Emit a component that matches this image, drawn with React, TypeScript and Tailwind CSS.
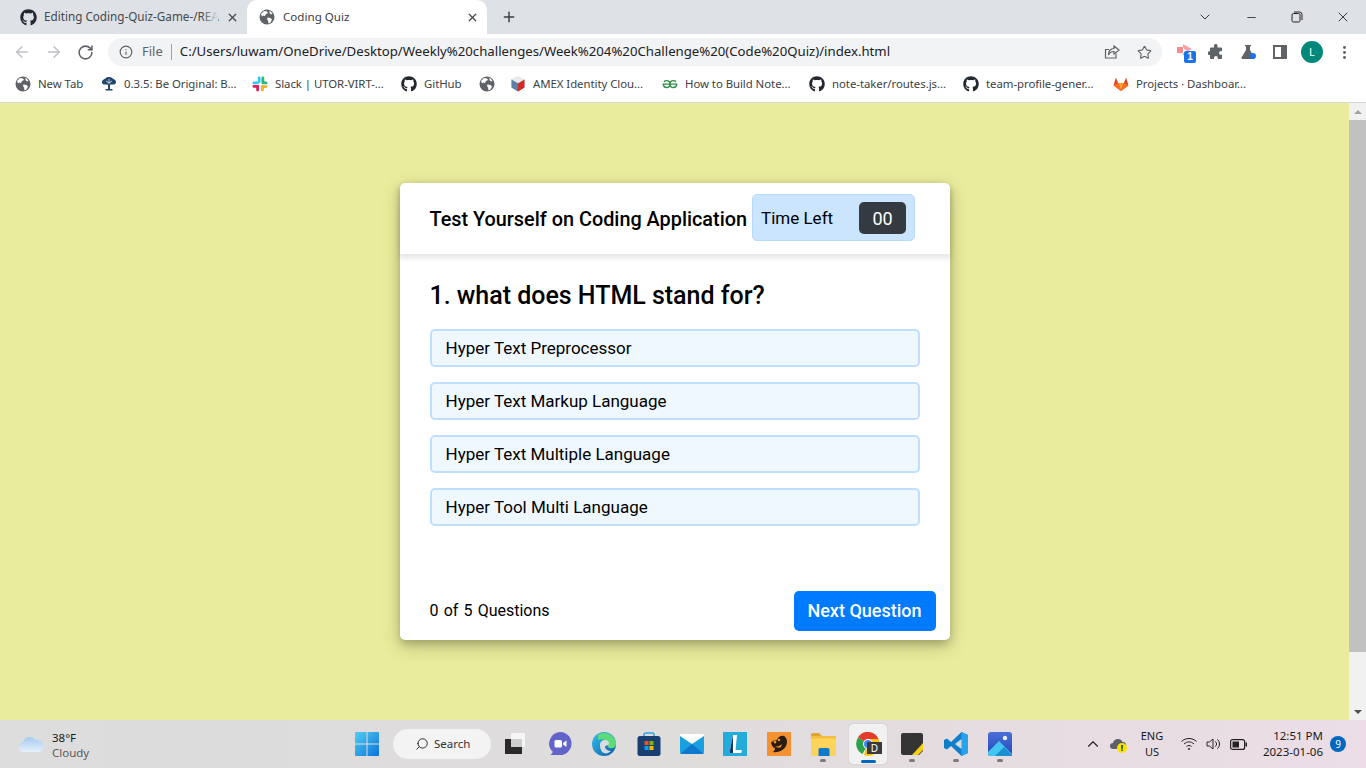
import React from "react";
import { FaGithub } from "react-icons/fa";
import { ChevronDown, ChevronUp, Minus, X, Plus, ArrowLeft, ArrowRight, RotateCw, Info, Star, Search, MoreVertical } from "lucide-react";

const Globe = ({ s = 16 }: { s?: number }) => (
  <svg width={s} height={s} viewBox="0 0 16 16" className="shrink-0">
    <circle cx="8" cy="8" r="7.5" fill="#5f6368" />
    <path d="M2 5l3-3 3 .5 1 1.500-2 1-1 2-2-.5-1 1zM8.500 8.500l3 .5 1.500 1.500-1.500 3-2 1-.5-3-1-1.500zM10.500 1.500l3 3-1.500 1-1.500-1.500z" fill="#fff" />
  </svg>
);
const Gh = () => <FaGithub size={16} color="#24292f" className="shrink-0" />;

const Tree = () => (
  <svg width={16} height={16} viewBox="0 0 16 16" className="shrink-0">
    <path d="M8 1C5 1 4 3 2 4c-1.500 1-1.500 4 1 4.500 1.500.3 3-.3 4 .5v4H4.500v1.500h7V13H9V9c1-.8 2.500-.2 4-.5 2.500-.5 2.500-3.500 1-4.500-2-1-3-3-6-3z" fill="#22466e" />
    <path d="M8 3v5M5 5l3 2 3-2" fill="none" stroke="#fff" strokeWidth=".7" />
  </svg>
);
const Slack = () => (
  <svg width={16} height={16} viewBox="0 0 16 16" className="shrink-0">
    <rect x="5.800" y="0.500" width="2.800" height="6.500" rx="1.400" fill="#36c5f0" />
    <rect x="0.500" y="5.500" width="6.500" height="2.800" rx="1.400" fill="#36c5f0" />
    <rect x="9.500" y="0.500" width="2.800" height="7" rx="1.400" fill="#2eb67d" />
    <rect x="9.500" y="5.500" width="6" height="2.800" rx="1.400" fill="#2eb67d" />
    <rect x="9" y="9.200" width="2.800" height="6.300" rx="1.400" fill="#ecb22e" />
    <rect x="9" y="9.200" width="6.500" height="2.800" rx="1.400" fill="#ecb22e" />
    <rect x="4.200" y="9" width="2.800" height="6.500" rx="1.400" fill="#e01e5a" />
    <rect x="0.500" y="9" width="6.500" height="2.800" rx="1.400" fill="#e01e5a" />
  </svg>
);
const Amex = () => (
  <svg width={16} height={16} viewBox="0 0 16 16" className="shrink-0">
    <path d="M8 .5l6.500 3v8L8 15.500 1.500 11.500v-8z" fill="#c8ccd0" />
    <path d="M8 7.500L1.500 3.500v8L8 15.500z" fill="#5b7fa8" />
    <path d="M8 7.500l6.500-4v8L8 15.500z" fill="#cf2a2a" />
    <path d="M8 1l6 2.600L8 7 2 3.600z" fill="#e9ebee" />
  </svg>
);
const Gfg = () => (
  <svg width={16} height={16} viewBox="0 0 16 16" className="shrink-0" fill="none" stroke="#2f8d46" strokeWidth="1.300">
    <path d="M8 8.200H14.800C14.500 10.500 13 11.500 11.500 11.500 9.500 11.500 8 10 8 8.200 8 6.200 9.500 4.700 11.500 4.700 12.600 4.700 13.500 5.200 14 5.900" />
    <path d="M8 8.200H1.200C1.500 10.500 3 11.500 4.500 11.500 6.500 11.500 8 10 8 8.200 8 6.200 6.500 4.700 4.500 4.700 3.400 4.700 2.500 5.200 2 5.900" />
  </svg>
);
const Gitlab = () => (
  <svg width={16} height={16} viewBox="0 0 17 16" className="shrink-0">
    <path d="M8.500 15.500L.6 9.500 3 1l2.500 6h6L14 1l2.400 8.500z" fill="#e24329" />
    <path d="M8.500 15.500L5.500 7h6z" fill="#fca326" />
    <path d="M8.500 15.500L.6 9.500l4.900-2.500zM8.500 15.500l7.900-6-4.900-2.500z" fill="#fc6d26" />
  </svg>
);

const bookmarks: { icon: React.ReactNode; label: string; w: string }[] = [
  { icon: <Globe />, label: "New Tab", w: "w-[46px]" },
  { icon: <Tree />, label: "0.3.5: Be Original: B...", w: "w-[111px]" },
  { icon: <Slack />, label: "Slack | UTOR-VIRT-...", w: "w-[109px]" },
  { icon: <Gh />, label: "GitHub", w: "w-[38px]" },
  { icon: <Globe />, label: "", w: "w-0" },
  { icon: <Amex />, label: "AMEX Identity Clou...", w: "w-[112px]" },
  { icon: <Gfg />, label: "How to Build Note...", w: "w-[107px]" },
  { icon: <Gh />, label: "note-taker/routes.js...", w: "w-[114px]" },
  { icon: <Gh />, label: "team-profile-gener...", w: "w-[110px]" },
  { icon: <Gitlab />, label: "Projects · Dashboar...", w: "w-[111px]" },
];

const options = ["Hyper Text Preprocessor", "Hyper Text Markup Language", "Hyper Text Multiple Language", "Hyper Tool Multi Language"];

const ui = "font-['Noto_Sans','Open_Sans',sans-serif]";

function Chrome() {
  return (
    <div className="flex flex-col shrink-0 bg-white">
      {/* tab strip */}
      <div className="h-[34px] bg-[#dee1e6] flex items-center relative">
        <div className="w-[247px] h-full flex items-center pl-[20px] shrink-0">
          <FaGithub size={17} color="#24292f" className="shrink-0" />
          <div className="ml-[7px] w-[174px] relative whitespace-nowrap text-[11.7px] text-[#45484d]">
            Editing Coding-Quiz-Game-/REA
            <span className="absolute right-0 top-0 h-full w-[16px] bg-gradient-to-r from-transparent to-[#dee1e6]" />
          </div>
          <X size={13} strokeWidth={2.4} color="#45484d" className="ml-[8px]" />
        </div>
        <div className="w-[240px] h-full bg-white rounded-t-[10px] flex items-center pl-[12px] shrink-0">
          <Globe />
          <span className="ml-[8px] w-[178px] text-[11.6px] text-[#3c4043]">Coding Quiz</span>
          <X size={13} strokeWidth={2.4} color="#45484d" className="ml-[5px]" />
        </div>
        <Plus size={16} strokeWidth={2.2} color="#3c4043" className="ml-[14px]" />
        <div className="ml-auto flex items-center h-full">
          <ChevronDown size={16} strokeWidth={1.4} color="#2b2b2b" className="mr-[32px]" />
          <Minus size={13} strokeWidth={1.4} color="#111" className="mr-[33px]" />
          <svg width={12} height={12} viewBox="0 0 12 12" fill="none" stroke="#222" strokeWidth="1" className="mr-[32px]">
            <rect x="1" y="2.500" width="8" height="8.500" rx="1.500" />
            <path d="M3 1h5.500A2.500 2.500 0 0 1 11 3.500V9" />
          </svg>
          <X size={16} strokeWidth={1.2} color="#111" className="mr-[15px]" />
        </div>
      </div>
      {/* toolbar */}
      <div className="h-[34px] flex items-center pt-[2px] relative">
        <ArrowLeft size={18} strokeWidth={2} color="#bdc1c6" className="ml-[13px]" />
        <ArrowRight size={18} strokeWidth={2} color="#bdc1c6" className="ml-[14px]" />
        <RotateCw size={17} strokeWidth={2.2} color="#5f6368" className="ml-[14px]" />
        <div className="ml-[14px] w-[1054px] h-[28px] rounded-full bg-[#f1f3f4] flex items-center pl-[11px]">
          <Info size={14} strokeWidth={2} color="#5f6368" />
          <span className="ml-[9px] text-[13px] text-[#5f6368]">File</span>
          <span className="ml-[8px] w-px h-[16px] bg-[#9aa0a6]" />
          <span className="ml-[8px] text-[13.2px] text-[#202124] whitespace-nowrap">C:/Users/luwam/OneDrive/Desktop/Weekly%20challenges/Week%204%20Challenge%20(Code%20Quiz)/index.html</span>
          <div className="ml-auto flex items-center gap-[17px] pr-[10px]">
            <svg width={16} height={16} viewBox="0 0 16 16" fill="none" stroke="#5f6368" strokeWidth="1.200">
              <path d="M12 9.500V14H1.500V5.500H5" />
              <path d="M10 2l5 4-5 4V7.500C7.500 7.500 5.500 8.500 4.500 11c0-4 2-6.500 5.500-6.500z" />
            </svg>
            <Star size={15} strokeWidth={1.8} color="#5f6368" />
          </div>
        </div>
        <div className="relative ml-[15px] w-[16px] h-[16px]">
          <svg width={18} height={16} viewBox="0 0 18 16">
            <rect x="0" y="3" width="6" height="6" fill="#f68b8b" />
            <path d="M6 0l9 5-4 2.500L7.500 5.500 6 3z" fill="#f8a5a5" />
            <path d="M6 9l5-1.500-1 3-4 .5z" fill="#f8a5a5" />
          </svg>
          <span className="absolute left-[7px] top-[7px] w-[12px] h-[12px] bg-[#1a73e8] rounded-[2px] text-white text-[10px] leading-[12px] text-center font-bold font-['Liberation_Sans',sans-serif]">1</span>
        </div>
        <svg width={16} height={16} viewBox="0 0 16 16" className="ml-[15px]">
          <path d="M6 1.500a1.800 1.800 0 0 1 3.500 0V3.500H13a1 1 0 0 1 1 1V7h-1a1.900 1.900 0 0 0 0 3.800h1V14a1 1 0 0 1-1 1H9.800v-1a1.900 1.900 0 0 0-3.800 0v1H3a1 1 0 0 1-1-1v-3h-.5a1.900 1.900 0 0 1 0-3.800H2V4.500a1 1 0 0 1 1-1h3z" fill="#5f6368" />
        </svg>
        <div className="relative ml-[16px] w-[16px] h-[16px]">
          <svg width={16} height={16} viewBox="0 0 16 16">
            <path d="M5 1h6v1.200h-1V6l4.500 7.500A1 1 0 0 1 13.600 15H2.400a1 1 0 0 1-.9-1.500L6 6V2.200H5z" fill="#5f6368" />
          </svg>
          <span className="absolute left-[10px] top-[9px] w-[6px] h-[6px] rounded-full bg-[#1a73e8]" />
        </div>
        <svg width={14} height={14} viewBox="0 0 14 14" className="ml-[17px]">
          <path d="M0 0h14v14H0zM2 2v10h6V2z" fill="#5f6368" fillRule="evenodd" />
        </svg>
        <div className="ml-[14px] w-[22px] h-[22px] rounded-full bg-[#00897b] text-white text-[11px] flex items-center justify-center">L</div>
        <MoreVertical size={17} strokeWidth={2.2} color="#5f6368" className="ml-[13px]" />
      </div>
      {/* bookmarks */}
      <div className="h-[34px] flex items-center pl-[15px] pb-[2px] gap-[17px]">
        {bookmarks.map((b, i) => (
          <div key={i} className={`flex items-center gap-[7px] ${b.label ? "" : "-mr-[2px]"}`}>
            {b.icon}
            {b.label && <span className={`${b.w} text-[11.4px] tracking-[-0.05px] whitespace-nowrap text-[#3c4043]`}>{b.label}</span>}
          </div>
        ))}
      </div>
      <div className="h-px bg-[#d5d7dc]" />
    </div>
  );
}

function Quiz() {
  return (
    <div className="flex-1 min-w-0 bg-[#e9ec9c] flex items-center justify-center font-['Roboto',sans-serif] text-black">
      <div className="w-[550px] h-[457px] bg-white rounded-[5px] shadow-[0_4px_8px_0_rgba(0,0,0,0.2),0_6px_20px_0_rgba(0,0,0,0.19)] flex flex-col">
        <header className="h-[71px] px-[30px] rounded-t-[5px] flex items-center shadow-[0_3px_5px_1px_rgba(0,0,0,0.1)] shrink-0">
          <span className="text-[19.85px] font-medium whitespace-nowrap mt-[2px]">Test Yourself on Coding Application</span>
          <div className="ml-[5px] w-[163px] h-[47px] bg-[#cce5ff] border border-[#b8daff] rounded-[5px] flex items-center justify-between pl-[8px] pr-[8px] mt-[-2px]">
            <span className="text-[17px] mt-[3px]">Time Left</span>
            <span className="w-[47px] h-[32px] bg-[#343a40] text-white rounded-[5px] text-[18px] flex items-center justify-center pt-[1px]">00</span>
          </div>
        </header>
        <section className="px-[30px] pt-[27px] flex-1">
          <h2 className="text-[25px] leading-[30px] font-medium tracking-[-0.02px]">1. what does HTML stand for?</h2>
          <div className="mt-[18px] flex flex-col gap-[15px]">
            {options.map((o) => (
              <div key={o} className="w-[490px] h-[38px] bg-[#f0f8ff] border-2 border-[#c0dfff] rounded-[5px] pl-[14px] pt-[1px] flex items-center text-[17px]">{o}</div>
            ))}
          </div>
        </section>
        <footer className="h-[60px] pl-[30px] pr-[14px] flex items-center justify-between shrink-0">
          <span className="text-[16px] [word-spacing:1.200px] mt-[1px]">0 of 5 Questions</span>
          <button className="w-[142px] h-[40px] mt-[1px] bg-[#007bff] text-white rounded-[5px] text-[18px] font-medium">Next Question</button>
        </footer>
      </div>
    </div>
  );
}

function Scrollbar() {
  return (
    <div className="w-[17px] bg-[#f1f1f1] flex flex-col items-center shrink-0">
      <div className="h-[17px] flex items-center justify-center shrink-0">
        <span className="w-0 h-0 border-x-[4px] border-x-transparent border-b-[4px] border-b-[#a3a3a3]" />
      </div>
      <div className="w-full h-[532px] bg-[#c1c1c1]" />
      <div className="flex-1" />
      <div className="h-[17px] flex items-center justify-center shrink-0">
        <span className="w-0 h-0 border-x-[4px] border-x-transparent border-t-[4px] border-t-[#505050]" />
      </div>
    </div>
  );
}

const TB = ({ children, w = 44, active, dot }: { children: React.ReactNode; w?: number; active?: boolean; dot?: boolean }) => (
  <div className={`relative h-[40px] flex items-center justify-center shrink-0 rounded-[4px] ${active ? "bg-[#f2f1f2] shadow-[0_0_1px_rgba(0,0,0,0.25)]" : ""}`} style={{ width: w }}>
    {children}
    {active && <span className="absolute bottom-[1px] left-[12px] w-[15px] h-[3px] rounded-full bg-[#0067c0]" />}
    {dot && <span className="absolute bottom-[2px] left-1/2 -translate-x-1/2 w-[6px] h-[3px] rounded-full bg-[#7b7b7b]" />}
  </div>
);

function Taskbar() {
  return (
    <div className={`h-[48px] shrink-0 flex items-center bg-gradient-to-r from-[#dddddd] via-[#dfdcdc] to-[#ecdde6] text-[#1a1a1a] ${ui}`}>
      <div className="w-[355px] pl-[18px] flex items-center shrink-0">
        <svg width={26} height={18} viewBox="0 0 26 18">
          <defs>
            <linearGradient id="cl" x1="0" y1="0" x2="0" y2="1">
              <stop offset="0" stopColor="#a5c8f2" />
              <stop offset="1" stopColor="#e7f1fb" />
            </linearGradient>
          </defs>
          <path d="M6 17a5 5 0 0 1-1-9.900A7 7 0 0 1 17.500 5 5.500 5.500 0 0 1 21 17z" fill="url(#cl)" />
        </svg>
        <div className="ml-[8px] pt-[2px] flex flex-col leading-[15px] text-[11.5px]">
          <span>38°F</span>
          <span className="text-[#5a5a5a]">Cloudy</span>
        </div>
      </div>
      <svg width={24} height={24} viewBox="0 0 24 24" className="shrink-0">
        <defs>
          <linearGradient id="wi" x1="0" y1="0" x2="1" y2="1">
            <stop offset="0" stopColor="#52cdf5" />
            <stop offset="1" stopColor="#0a74d6" />
          </linearGradient>
        </defs>
        <path d="M1 0h10.500v11.500H0V1a1 1 0 0 1 1-1zM12.500 0H23a1 1 0 0 1 1 1v10.500H12.500zM0 12.500h11.500V24H1a1 1 0 0 1-1-1zM12.500 12.500H24V23a1 1 0 0 1-1 1H12.500z" fill="url(#wi)" />
      </svg>
      <div className="ml-[14px] w-[98px] h-[30px] rounded-full bg-[#f3f3f3] flex items-center pl-[22px] shrink-0">
        <Search size={14} strokeWidth={1.600} color="#222" className="-scale-x-100" />
        <span className="ml-[5px] text-[11.5px] text-[#333]">Search</span>
      </div>
      <div className="ml-[2px] flex items-center shrink-0">
        <TB>
          <svg width={24} height={24} viewBox="0 0 24 24">
            <rect x="8" y="1" width="14" height="14" fill="#f6f6f6" />
            <rect x="2" y="7" width="17" height="15" fill="#2a2a2a" />
            <rect x="8" y="7" width="11" height="8" fill="#cfcfcf" />
          </svg>
        </TB>
        <TB w={45}>
          <svg width={24} height={24} viewBox="0 0 24 24">
            <path d="M12 0a11.500 11.500 0 0 1 0 23H2.500L5 20A11.500 11.500 0 0 1 12 0z" fill="#6264c9" />
            <rect x="6.500" y="8" width="7.500" height="7.500" rx="1.500" fill="#fff" />
            <path d="M15 11l3.500-2.500v6.500L15 12.500z" fill="#fff" />
          </svg>
        </TB>
        <TB>
          <svg width={24} height={24} viewBox="0 0 24 24">
            <defs>
              <linearGradient id="ed" x1="0" y1="0" x2="1" y2="1">
                <stop offset="0" stopColor="#35c1f1" />
                <stop offset="1" stopColor="#0c59a4" />
              </linearGradient>
            </defs>
            <circle cx="12" cy="12" r="12" fill="url(#ed)" />
            <path d="M6 3c6-4 15-2 18 7 .5 4-2 7-6 6-2-.5-3-2-2-4-1-4-6-6-10-4z" fill="#5fdc7a" />
            <path d="M8 13c0-3 2-5 5-5 3 0 4 2 4 4-1 2-4 1-4 3 0 2 3 4 6 4-2 2-5 3-7 2-3-1-4-5-4-8z" fill="#d8dcde" />
          </svg>
        </TB>
        <TB w={45}>
          <svg width={24} height={24} viewBox="0 0 24 24">
            <path d="M7 5V3a2 2 0 0 1 2-2h6a2 2 0 0 1 2 2v2" fill="none" stroke="#27a3e3" strokeWidth="1.500" />
            <rect x="0.500" y="4" width="23" height="20" rx="2.500" fill="#173f72" />
            <rect x="7.500" y="9" width="4" height="4" fill="#f25022" />
            <rect x="12.500" y="9" width="4" height="4" fill="#7fba00" />
            <rect x="7.500" y="14" width="4" height="4" fill="#00a4ef" />
            <rect x="12.500" y="14" width="4" height="4" fill="#ffb900" />
          </svg>
        </TB>
        <TB w={42}>
          <svg width={24} height={20} viewBox="0 0 24 20">
            <rect width="24" height="20" rx="2" fill="#1a9fe0" />
            <path d="M0 2l12 8 12-8V1a1 1 0 0 0-1-1H1a1 1 0 0 0-1 1z" fill="#fff" />
            <path d="M0 20L12 10l12 10z" fill="#0f78cc" />
          </svg>
        </TB>
        <TB>
          <div className="w-[24px] h-[24px] bg-[#23abd9] flex items-center justify-center relative">
            <svg width={24} height={24} viewBox="0 0 24 24">
              <path d="M10 3h4l-1.500 15H19l-.8 3H6.500z" fill="#fff" />
              <path d="M10 3L6.500 21h3.500z" fill="#16306c" />
            </svg>
          </div>
        </TB>
        <TB>
          <div className="w-[24px] h-[24px] bg-[#f49232] flex items-center justify-center">
            <svg width={20} height={18} viewBox="0 0 20 18">
              <path d="M2 8c1-2 3-3 6-3 1-3 4-5 7-4 3 2 4 6 2 10-2 4-8 7-13 6 1-1 2-2 2-4-2 0-3-3-4-5z" fill="#2a1c10" />
              <circle cx="6" cy="7" r="1.400" fill="#f49232" />
              <circle cx="10" cy="5" r="1.200" fill="#f49232" />
              <path d="M6 11c2 1 5 0 7-2l-1 3c-2 1-4 1-6-1z" fill="#f49232" />
            </svg>
          </div>
        </TB>
        <TB dot>
          <svg width={25} height={23} viewBox="0 0 25 23">
            <path d="M0 2a2 2 0 0 1 2-2h6l3 3h-11z" fill="#e0a530" />
            <path d="M0 3h23a2 2 0 0 1 2 2v16a2 2 0 0 1-2 2H2a2 2 0 0 1-2-2z" fill="#fcd45c" />
            <rect x="0" y="3" width="25" height="2.500" fill="#f3bd42" />
            <path d="M9 15h8a1.500 1.500 0 0 1 1.500 1.500V23h-11v-6.500A1.500 1.500 0 0 1 9 15z" fill="#0f78c8" />
          </svg>
        </TB>
        <div className="w-[4px] shrink-0" />
        <TB w={38} active>
          <svg width={24} height={24} viewBox="0 0 24 24">
            <path d="M12 12L2 5.500A11.500 11.500 0 0 1 22.500 7H12z" fill="#e33b2e" />
            <path d="M12 12l-5.500 10A11.500 11.500 0 0 1 2 5.500z" fill="#2ea24a" />
            <path d="M12 7h10.500A11.500 11.500 0 0 1 8 23z" fill="#fbc116" />
            <circle cx="12" cy="12" r="5" fill="#fff" />
            <circle cx="12" cy="12" r="4" fill="#4285f4" />
          </svg>
          <span className="absolute left-[18px] top-[18px] w-[15px] h-[12px] bg-[#3a3a3a] text-white text-[10px] leading-[12px] text-center">D</span>
        </TB>
        <TB w={50} dot>
          <svg width={22} height={22} viewBox="0 0 22 22">
            <path d="M2 0h18a2 2 0 0 1 2 2v16l-4 4H2a2 2 0 0 1-2-2V2a2 2 0 0 1 2-2z" fill="#343434" />
            <path d="M11 22L22 10v7l-5 5z" fill="#f6d10f" />
          </svg>
        </TB>
        <TB w={38} dot>
          <svg width={24} height={24} viewBox="0 0 24 24">
            <path d="M17.500 0L24 3v18l-6.500 3L7 14l-4 3.500L0 16V8l3-1.500L7 10z" fill="#0d7fca" />
            <path d="M17.500 0L24 3v18l-6.500 3z" fill="#2aa3ef" />
            <path d="M17.500 7L11 12l6.500 5z" fill="#dedcdc" />
          </svg>
        </TB>
        <TB w={50} dot>
          <svg width={24} height={24} viewBox="0 0 24 24">
            <defs>
              <linearGradient id="ph" x1="0" y1="0" x2="0" y2="1">
                <stop offset="0" stopColor="#4b6fd8" />
                <stop offset="1" stopColor="#1f49b8" />
              </linearGradient>
            </defs>
            <rect width="24" height="24" rx="3" fill="url(#ph)" />
            <circle cx="17" cy="6" r="2.200" fill="#eef" />
            <path d="M0 20l11-11 13 13v-1a3 3 0 0 1-3 3H3a3 3 0 0 1-3-3z" fill="#43c6f0" />
            <path d="M7 24l9-9 8 8v1z" fill="#1b8fd0" />
          </svg>
        </TB>
      </div>
      <div className="ml-auto flex items-center pr-[20px] shrink-0">
        <ChevronUp size={18} strokeWidth={1.500} color="#222" className="ml-[2px]" />
        <div className="relative ml-[8px] w-[16px] h-[16px]">
          <svg width={16} height={16} viewBox="0 0 16 16">
            <path d="M3 13a3 3 0 0 1 0-6 5 5 0 0 1 9.500-1A3.500 3.500 0 0 1 13 13z" fill="#5a5f68" />
          </svg>
          <span className="absolute left-[7px] top-[7px] w-[10px] h-[10px] rounded-full bg-[#fce100] text-[8px] leading-[10px] text-center font-bold text-black">!</span>
        </div>
        <div className="ml-[12px] w-[28px] flex flex-col items-center text-[11px] leading-[16px]">
          <span>ENG</span>
          <span>US</span>
        </div>
        <svg width={16} height={14} viewBox="0 0 16 14" fill="none" stroke="#222" strokeWidth="1" className="ml-[15px]">
          <path d="M.5 4.500C4.500.500 11.500.500 15.500 4.500M3 7c3-2.800 7-2.800 10 0M5.500 9.500c1.500-1.300 3.500-1.300 5 0" />
          <circle cx="8" cy="12" r="1" fill="#222" stroke="none" />
        </svg>
        <svg width={16} height={14} viewBox="0 0 16 14" fill="none" stroke="#222" strokeWidth="1" className="ml-[9px]">
          <path d="M1 5v4h2.500L7 12V2L3.500 5z" />
          <path d="M9.500 4.500a3.500 3.500 0 0 1 0 5M11.500 2.500a6 6 0 0 1 0 9" />
        </svg>
        <svg width={17} height={11} viewBox="0 0 17 11" className="ml-[8px]">
          <rect x=".6" y=".6" width="14" height="9.800" rx="2" fill="none" stroke="#222" strokeWidth="1.200" />
          <rect x="2.500" y="2.500" width="6.500" height="6" fill="#222" />
          <rect x="15.500" y="3.500" width="1.500" height="4" fill="#222" />
        </svg>
        <div className="ml-[15px] w-[61px] flex flex-col items-end text-[11.5px] leading-[16px] whitespace-nowrap">
          <span>12:51 PM</span>
          <span>2023-01-06</span>
        </div>
        <span className="ml-[7px] w-[16px] h-[16px] rounded-full bg-[#0067c0] text-white text-[10px] leading-[16px] text-center">9</span>
      </div>
    </div>
  );
}

export default function App() {
  return (
    <div className={`w-[1366px] h-[768px] overflow-hidden flex flex-col ${ui}`}>
      <Chrome />
      <div className="flex-1 flex min-h-0">
        <Quiz />
        <Scrollbar />
      </div>
      <Taskbar />
    </div>
  );
}
